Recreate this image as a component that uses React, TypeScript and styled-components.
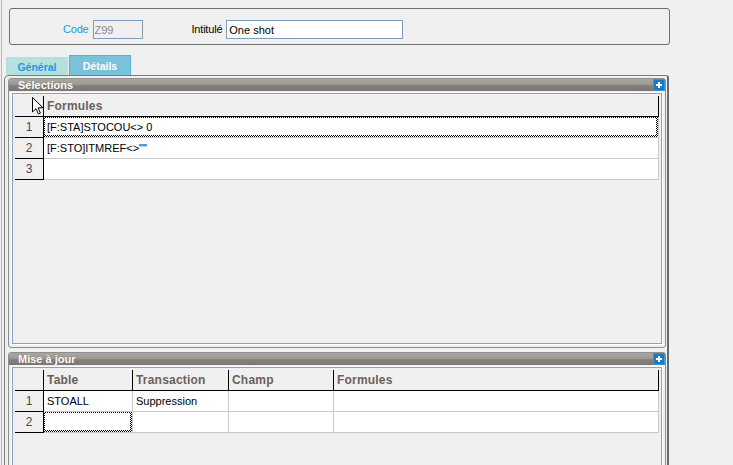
import styled, { createGlobalStyle } from 'styled-components';

const GlobalStyle = createGlobalStyle`
  html, body {
    margin: 0;
    padding: 0;
    background: #f0f0f0;
  }
  body {
    font-family: "Liberation Sans", Arial, sans-serif;
    font-size: 11px;
    color: #000;
  }
`;

const Page = styled.div`
  box-sizing: border-box;
  width: 732px;
  height: 465px;
  margin-left: 1px;
  border-left: 1px solid #a6b9cc;
  padding-top: 8px;
  display: flex;
  flex-direction: column;
  overflow: hidden;
`;

const HeaderBox = styled.div`
  box-sizing: border-box;
  flex: none;
  width: 661px;
  height: 37px;
  margin-left: 7px;
  border: 1px solid #6e6e6e;
  border-radius: 3px;
  padding: 11px 0 0 53px;
  display: flex;
  align-items: flex-start;
`;

const Label = styled.span<{ $accent?: boolean; $gap?: number }>`
  line-height: 19px;
  margin-left: ${(p) => p.$gap ?? 0}px;
  margin-right: 4px;
  letter-spacing: -0.2px;
  color: ${(p) => (p.$accent ? '#1d9ae0' : '#000')};
`;

const Field = styled.input<{ $width: number; $disabled?: boolean }>`
  box-sizing: border-box;
  width: ${(p) => p.$width}px;
  height: 19px;
  margin: 0;
  padding: 0 0 0 ${(p) => (p.$disabled ? 1 : 2)}px;
  border: 1px solid #7f9db9;
  border-radius: 0;
  outline: none;
  background: ${(p) => (p.$disabled ? '#f0f0f0' : '#fff')};
  color: ${(p) => (p.$disabled ? '#8a8a8a' : '#000')};
  font: inherit;
`;

const TabStrip = styled.div`
  flex: none;
  height: 20px;
  margin: 10px 0 0 4px;
  display: flex;
  align-items: flex-end;
  gap: 1px;
`;

const Tab = styled.div<{ $active?: boolean }>`
  box-sizing: border-box;
  width: 62px;
  height: ${(p) => (p.$active ? 20 : 18)}px;
  display: flex;
  align-items: center;
  justify-content: center;
  font-size: 10.5px;
  font-weight: bold;
  color: ${(p) => (p.$active ? '#fff' : '#1d9ae0')};
  background: ${(p) => (p.$active ? '#79c2d9' : '#b4e0e0')};
  border: 1px solid ${(p) => (p.$active ? '#4fb2d8' : '#b4e0e0')};
  border-bottom: none;
  padding-top: 1px;
`;

const Panel = styled.div`
  box-sizing: border-box;
  flex: 1;
  width: 665px;
  margin-left: 2px;
  border-left: 1px solid #7b7b7b;
  border-top: 1px solid #7b7b7b;
  border-right: 2px solid #6a6a6a;
  border-top-left-radius: 5px;
  border-top-right-radius: 3px;
  padding: 2px 1px 0 3px;
  display: flex;
  flex-direction: column;
  gap: 4px;
`;

const Section = styled.div<{ $height?: number }>`
  box-sizing: border-box;
  ${(p) => (p.$height ? `height: ${p.$height}px; flex: none;` : 'flex: 1 0 auto; min-height: 130px;')}
  border: 1px solid #8e8e8e;
  border-radius: 3px;
  display: flex;
  flex-direction: column;
`;

const SectionBar = styled.div`
  flex: none;
  height: 12px;
  display: flex;
  align-items: center;
  justify-content: space-between;
  padding-left: 9px;
  background: linear-gradient(#aaa7a1 0%, #9d9993 45%, #85807b 55%, #7d7773 100%);
`;

const SectionTitle = styled.span`
  color: #fff;
  font-size: 11px;
  font-weight: bold;
  line-height: 12px;
  text-shadow: 0 0 1px #6a6560;
`;

const PlusButton = styled.div`
  box-sizing: border-box;
  width: 12px;
  height: 12px;
  background: #1b79c3;
  border: 1px solid #3a92d4;
  display: flex;
  align-items: center;
  justify-content: center;
`;

const SectionBody = styled.div`
  flex: 1;
  display: flex;
  padding: 2px 3px 3px 3px;
`;

const Frame = styled.div`
  box-sizing: border-box;
  flex: 1;
  border: 1px solid #86a5c5;
  box-shadow: 0 0 0 1px #fff;
  padding: 2px;
`;

const Grid = styled.div<{ $cols: string }>`
  display: grid;
  grid-template-columns: ${(p) => p.$cols};
  grid-auto-rows: 21px;
`;

const CellBase = styled.div`
  box-sizing: border-box;
  position: relative;
  line-height: 20px;
  white-space: nowrap;
  overflow: hidden;
`;

const CornerCell = styled(CellBase)`
  background: #f0f0f0;
  border-right: 1px solid #000;
  border-bottom: 1px solid #000;
`;

const HeadCell = styled(CellBase)`
  background: #f0f0f0;
  border-right: 1px solid #000;
  border-bottom: 1px solid #000;
  padding-left: 3px;
  font-size: 12px;
  font-weight: bold;
  color: #6b6059;
  letter-spacing: 0.2px;
`;

const RowNum = styled(CellBase)`
  background: #f0f0f0;
  border-right: 1px solid #000;
  border-bottom: 1px solid #000;
  text-align: center;
  font-size: 12px;
  color: #4a4a4a;
`;

const DataCell = styled(CellBase)<{ $focused?: boolean }>`
  background: #fff;
  border-right: 1px solid #c9c9c9;
  border-bottom: 1px solid #c9c9c9;
  padding-left: 3px;
  font-size: 11px;

  ${(p) =>
    p.$focused &&
    `
    &::after {
      content: '';
      position: absolute;
      inset: -1px 0 0 -1px;
      border: 2px solid transparent;
      background: repeating-conic-gradient(#000 0 25%, #fff 0 50%) 0 0 / 2px 2px border-box;
      -webkit-mask: linear-gradient(#000 0 0) padding-box, linear-gradient(#000 0 0) border-box;
      -webkit-mask-composite: xor;
      mask: linear-gradient(#000 0 0) padding-box exclude, linear-gradient(#000 0 0) border-box;
    }
  `}
`;

const Cursor = styled.svg`
  position: absolute;
  left: 17px;
  top: 1px;
`;

const Plus = () => (
  <PlusButton>
    <svg width="8" height="8" viewBox="0 0 8 8">
      <rect x="3" y="1" width="2" height="6" fill="#fff" />
      <rect x="1" y="3" width="6" height="2" fill="#fff" />
    </svg>
  </PlusButton>
);

type Row = { cells: string[]; focus?: number };

const selections: Row[] = [
  { cells: ['[F:STA]STOCOU<> 0'], focus: 0 },
  { cells: ['[F:STO]ITMREF<>""'] },
  { cells: [''] },
];

const updates: Row[] = [
  { cells: ['STOALL', 'Suppression', '', ''] },
  { cells: ['', '', '', ''], focus: 0 },
];

type TableProps = {
  cols: string;
  headers: string[];
  rows: Row[];
  cursor?: boolean;
};

const Table = ({ cols, headers, rows, cursor }: TableProps) => (
  <Grid $cols={cols}>
    <CornerCell>
      {cursor && (
        <Cursor width="12" height="18" viewBox="0 0 12 18">
          <path
            d="M0.5 0.5 L0.5 15 L4 11.6 L6.4 17 L8.4 16.1 L6.1 10.8 L11 10.8 Z"
            fill="#fff"
            stroke="#000"
            strokeWidth="1"
          />
        </Cursor>
      )}
    </CornerCell>
    {headers.map((h) => (
      <HeadCell key={h}>{h}</HeadCell>
    ))}
    {rows.map((row, i) => [
      <RowNum key={`n${i}`}>{i + 1}</RowNum>,
      ...row.cells.map((c, j) => (
        <DataCell key={`c${i}-${j}`} $focused={row.focus === j}>
          {c}
        </DataCell>
      )),
    ])}
  </Grid>
);

export default function App() {
  return (
    <>
      <GlobalStyle />
      <Page>
        <HeaderBox>
          <Label $accent>Code</Label>
          <Field $width={50} $disabled readOnly value="Z99" />
          <Label $gap={49}>Intitulé</Label>
          <Field $width={177} readOnly value="One shot" />
        </HeaderBox>

        <TabStrip>
          <Tab>Général</Tab>
          <Tab $active>Détails</Tab>
        </TabStrip>

        <Panel>
          <Section $height={270}>
            <SectionBar>
              <SectionTitle>Sélections</SectionTitle>
              <Plus />
            </SectionBar>
            <SectionBody>
              <Frame>
                <Table cols="29px 615px" headers={['Formules']} rows={selections} cursor />
              </Frame>
            </SectionBody>
          </Section>

          <Section>
            <SectionBar>
              <SectionTitle>Mise à jour</SectionTitle>
              <Plus />
            </SectionBar>
            <SectionBody>
              <Frame>
                <Table
                  cols="29px 89px 96px 105px 325px"
                  headers={['Table', 'Transaction', 'Champ', 'Formules']}
                  rows={updates}
                />
              </Frame>
            </SectionBody>
          </Section>
        </Panel>
      </Page>
    </>
  );
}
